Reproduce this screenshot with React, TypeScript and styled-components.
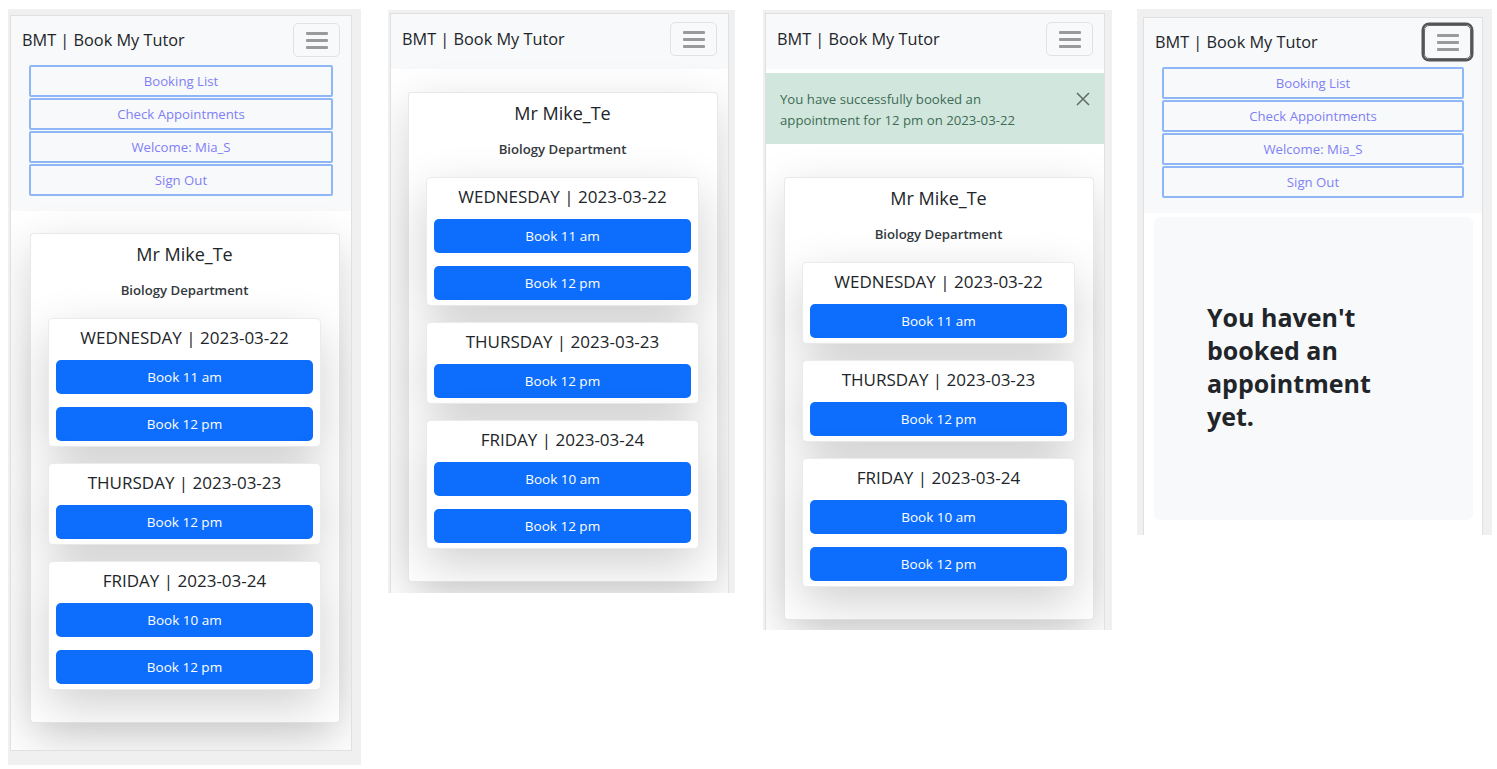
import React from "react";
import styled, { createGlobalStyle } from "styled-components";

const Global = createGlobalStyle`
  html, body { margin: 0; padding: 0; background: #ffffff; }
  body {
    font-family: "Open Sans", "Noto Sans", "Liberation Sans", sans-serif;
    color: #212529;
  }
  * { box-sizing: border-box; }
`;

const Page = styled.div`
  display: flex;
  align-items: flex-start;
  width: 1497px;
  height: 769px;
  overflow: hidden;
  background: #ffffff;
`;

const Frame = styled.div<{ $ml: number; $mt: number; $pad: string }>`
  flex: none;
  margin-left: ${(p) => p.$ml}px;
  margin-top: ${(p) => p.$mt}px;
  padding: ${(p) => p.$pad};
  background: #f0f0f0;
`;

const Screen = styled.div<{ $w: number; $h: number; $closed?: boolean }>`
  width: ${(p) => p.$w}px;
  height: ${(p) => p.$h}px;
  border: 1px solid #e0e0e0;
  border-bottom: ${(p) => (p.$closed ? "1px solid #e0e0e0" : "none")};
  background: #ffffff;
  overflow: hidden;
  display: flex;
  flex-direction: column;
`;

const Navbar = styled.div<{ $open?: boolean }>`
  background: #f8f9fa;
  padding: ${(p) => (p.$open ? "7px 11px 15px 11px" : "8px 11px 13px 11px")};
  display: flex;
  flex-direction: column;
`;

const NavTop = styled.div`
  display: flex;
  align-items: center;
  justify-content: space-between;
  height: 34px;
`;

const Brand = styled.div`
  font-size: 16.3px;
  line-height: 24px;
  color: #212529;
`;

const Toggler = styled.div<{ $focus?: boolean }>`
  width: 47px;
  height: 34px;
  border: 1px solid ${(p) => (p.$focus ? "#6a6a6a" : "#e2e2e2")};
  border-radius: 5px;
  display: flex;
  flex-direction: column;
  align-items: center;
  justify-content: center;
  gap: 4px;
  box-shadow: ${(p) => (p.$focus ? "0 0 0 2.5px #555555" : "none")};
`;

const Bar = styled.span`
  display: block;
  width: 22px;
  height: 3px;
  border-radius: 1px;
  background: #9a9a9a;
`;

const Menu = styled.div`
  margin-top: 8px;
  padding: 0 7px;
  display: flex;
  flex-direction: column;
  gap: 1px;
`;

const MenuLink = styled.div`
  height: 32px;
  border: 2px solid #8fb7f8;
  border-radius: 2px;
  display: flex;
  align-items: center;
  justify-content: center;
  font-size: 13.2px;
  color: #7f7ff7;
`;

const Alert = styled.div`
  margin-top: 4px;
  background: #d1e7dd;
  color: #3f6b55;
  padding: 16px 14px 13px 14px;
  display: flex;
  justify-content: space-between;
  align-items: flex-start;
`;

const AlertText = styled.div`
  width: 270px;
  font-size: 13.2px;
  line-height: 21px;
`;

const CloseIcon = styled.svg`
  margin-top: 3px;
  flex: none;
`;

const Content = styled.div<{ $top: number; $left: number }>`
  padding: ${(p) => p.$top}px 0 0 ${(p) => p.$left}px;
`;

const Card = styled.div`
  width: 310px;
  background: #ffffff;
  border: 1px solid rgba(0, 0, 0, 0.09);
  border-radius: 4px;
  box-shadow: 0 16px 48px rgba(0, 0, 0, 0.18);
  padding: 0 18px 32px 17px;
  display: flex;
  flex-direction: column;
`;

const TutorName = styled.div`
  margin-top: 7px;
  font-size: 18px;
  line-height: 27px;
  text-align: center;
`;

const Dept = styled.div`
  margin-top: 12px;
  font-size: 13.2px;
  line-height: 20px;
  font-weight: 600;
  text-align: center;
  color: #343a40;
`;

const DayList = styled.div`
  margin-top: 18px;
  display: flex;
  flex-direction: column;
  gap: 16px;
`;

const DayCard = styled.div`
  background: #ffffff;
  border: 1px solid rgba(0, 0, 0, 0.08);
  border-radius: 5px;
  box-shadow: 0 16px 48px rgba(0, 0, 0, 0.19);
  padding: 7px 7px 5px 7px;
  display: flex;
  flex-direction: column;
  gap: 13px;
`;

const DayTitle = styled.div`
  font-size: 17px;
  line-height: 24px;
  text-align: center;
  margin-bottom: -3px;
`;

const BookButton = styled.div`
  height: 34px;
  border-radius: 5px;
  background: #0d6efd;
  color: #ffffff;
  font-size: 13.5px;
  display: flex;
  align-items: center;
  justify-content: center;
`;

const EmptyWrap = styled.div`
  padding: 4px 9px 0 10px;
`;

const EmptyBox = styled.div`
  background: #f8f9fa;
  border-radius: 6px;
  height: 303px;
  padding: 84px 20px 0 53px;
`;

const EmptyTitle = styled.h1`
  margin: 0;
  max-width: 190px;
  font-size: 25px;
  line-height: 33px;
  font-weight: 700;
  color: #212529;
`;

type Day = { title: string; slots: string[] };

const days: Day[] = [
  { title: "WEDNESDAY | 2023-03-22", slots: ["Book 11 am", "Book 12 pm"] },
  { title: "THURSDAY | 2023-03-23", slots: ["Book 12 pm"] },
  { title: "FRIDAY | 2023-03-24", slots: ["Book 10 am", "Book 12 pm"] },
];

const days3: Day[] = [
  { title: "WEDNESDAY | 2023-03-22", slots: ["Book 11 am"] },
  { title: "THURSDAY | 2023-03-23", slots: ["Book 12 pm"] },
  { title: "FRIDAY | 2023-03-24", slots: ["Book 10 am", "Book 12 pm"] },
];

const NavBar: React.FC<{ open?: boolean; focus?: boolean }> = ({ open, focus }) => (
  <Navbar $open={open}>
    <NavTop>
      <Brand>BMT | Book My Tutor</Brand>
      <Toggler $focus={focus}>
        <Bar />
        <Bar />
        <Bar />
      </Toggler>
    </NavTop>
    {open && (
      <Menu>
        <MenuLink>Booking List</MenuLink>
        <MenuLink>Check Appointments</MenuLink>
        <MenuLink>Welcome: Mia_S</MenuLink>
        <MenuLink>Sign Out</MenuLink>
      </Menu>
    )}
  </Navbar>
);

const TutorCard: React.FC<{ list: Day[] }> = ({ list }) => (
  <Card>
    <TutorName>Mr Mike_Te</TutorName>
    <Dept>Biology Department</Dept>
    <DayList>
      {list.map((d) => (
        <DayCard key={d.title}>
          <DayTitle>{d.title}</DayTitle>
          {d.slots.map((s, i) => (
            <BookButton key={i}>{s}</BookButton>
          ))}
        </DayCard>
      ))}
    </DayList>
  </Card>
);

export default function App() {
  return (
    <>
      <Global />
      <Page>
        <Frame $ml={8} $mt={9} $pad="6px 9px 14px 2px">
          <Screen $w={342} $h={736} $closed>
            <NavBar open />
            <Content $top={22} $left={19}>
              <TutorCard list={days} />
            </Content>
          </Screen>
        </Frame>

        <Frame $ml={27} $mt={10} $pad="3px 6px 0 2px">
          <Screen $w={339} $h={580}>
            <NavBar />
            <Content $top={23} $left={17}>
              <TutorCard list={days} />
            </Content>
          </Screen>
        </Frame>

        <Frame $ml={28} $mt={10} $pad="3px 7px 0 2px">
          <Screen $w={340} $h={617}>
            <NavBar />
            <Alert>
              <AlertText>
                You have successfully booked an appointment for 12 pm on 2023-03-22
              </AlertText>
              <CloseIcon width="14" height="14" viewBox="0 0 14 14">
                <path d="M1 1 L13 13 M13 1 L1 13" stroke="#5f6b64" strokeWidth="1.5" fill="none" />
              </CloseIcon>
            </Alert>
            <Content $top={33} $left={18}>
              <TutorCard list={days3} />
            </Content>
          </Screen>
        </Frame>

        <Frame $ml={25} $mt={9} $pad="8px 9px 0 6px">
          <Screen $w={340} $h={518}>
            <NavBar open focus />
            <EmptyWrap>
              <EmptyBox>
                <EmptyTitle>You haven't booked an appointment yet.</EmptyTitle>
              </EmptyBox>
            </EmptyWrap>
          </Screen>
        </Frame>
      </Page>
    </>
  );
}
